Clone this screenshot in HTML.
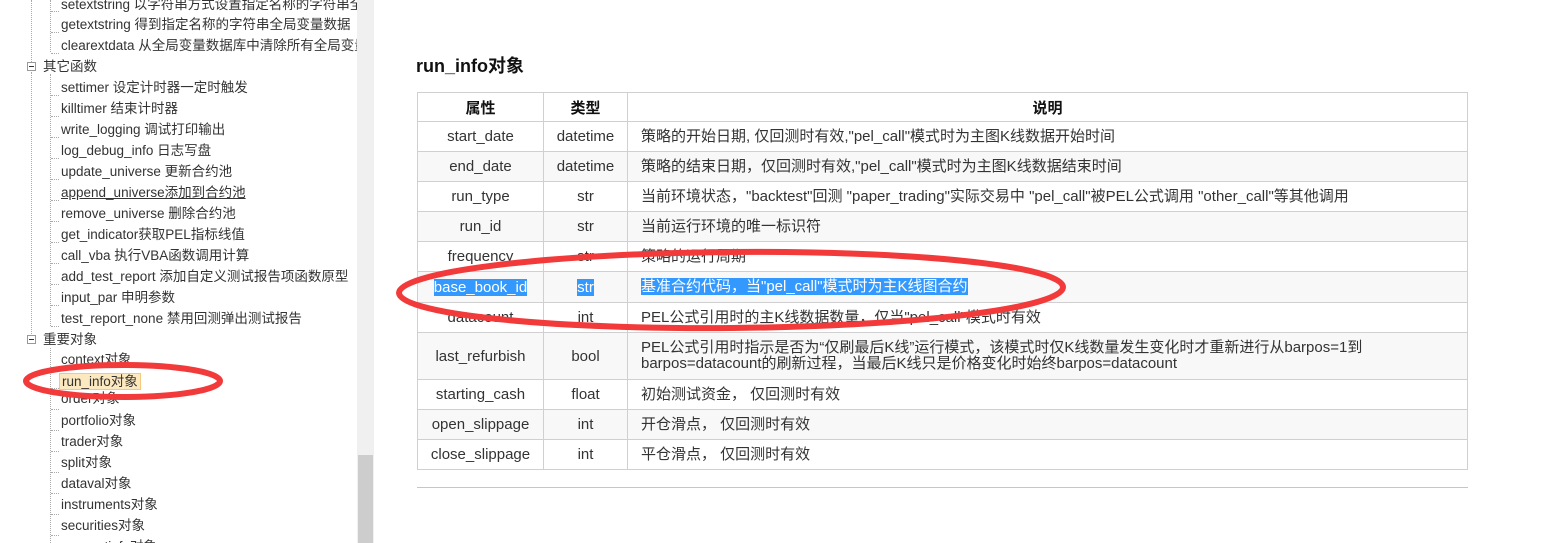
<!DOCTYPE html>
<html><head><meta charset="utf-8">
<style>
body{margin:0;width:1548px;height:543px;overflow:hidden;background:#fff;font-family:"Liberation Sans","Noto Sans CJK SC",sans-serif;color:#333;position:relative}
#side{position:absolute;left:0;top:0;width:357px;height:543px;overflow:hidden;font-size:13.5px}
.it{position:absolute;left:61px;white-space:nowrap;line-height:16px}
.grp{position:absolute;left:43px;white-space:nowrap;line-height:16px}
.con{position:absolute;left:51px;width:8px;border-top:1px dotted #aaa}
.exp{position:absolute;left:27px;width:7px;height:7px;border:1px solid #999;background:#fff}
.exp:after{content:"";position:absolute;left:1px;top:3px;width:5px;height:1px;background:#333}
.vl{position:absolute;border-left:1px dotted #aaa;width:0}
#sb{position:absolute;left:357px;top:0;width:17px;height:543px;background:#f0f0f0}
#th{position:absolute;left:358px;top:455px;width:15px;height:88px;background:#cdcdcd}
h3{position:absolute;left:416px;top:52px;margin:0;font-size:18px;font-weight:bold;color:#111}
table{position:absolute;left:417px;top:92px;width:1051px;border-collapse:collapse;font-size:15px}
td,th{border:1px solid #d0d0d0;padding:0;height:29px}
th{font-weight:bold;color:#111;height:28px}
td.c{text-align:center}
td.d{padding-left:13px;line-height:16px}
tr.g td{background:#f8f8f8}
.sel{background:#3399ff;color:#fff}
#hr{position:absolute;left:417px;top:487px;width:1051px;height:1px;background:#a8cdf0}
</style></head><body>
<div id="side">
<div class="vl" style="left:31px;top:0;height:62px"></div>
<div class="vl" style="left:31px;top:72px;height:262px"></div>
<div class="vl" style="left:50px;top:0;height:52px"></div>
<div class="vl" style="left:50px;top:74px;height:252px"></div>
<div class="vl" style="left:50px;top:348px;height:195px"></div>
<div class="con" style="top:11px"></div><div class="it" style="top:-3px">setextstring 以字符串方式设置指定名称的字符串全局变量</div>
<div class="con" style="top:32px"></div><div class="it" style="top:17px">getextstring 得到指定名称的字符串全局变量数据</div>
<div class="con" style="top:53px"></div><div class="it" style="top:38px">clearextdata 从全局变量数据库中清除所有全局变量</div>
<div class="exp" style="top:62px"></div><div class="grp" style="top:59px">其它函数</div>
<div class="con" style="top:95px"></div><div class="it" style="top:80px">settimer 设定计时器一定时触发</div>
<div class="con" style="top:116px"></div><div class="it" style="top:101px">killtimer 结束计时器</div>
<div class="con" style="top:137px"></div><div class="it" style="top:122px">write_logging 调试打印输出</div>
<div class="con" style="top:158px"></div><div class="it" style="top:143px">log_debug_info 日志写盘</div>
<div class="con" style="top:179px"></div><div class="it" style="top:164px">update_universe 更新合约池</div>
<div class="con" style="top:200px"></div><div class="it" style="top:185px;text-decoration:underline">append_universe添加到合约池</div>
<div class="con" style="top:221px"></div><div class="it" style="top:206px">remove_universe 删除合约池</div>
<div class="con" style="top:242px"></div><div class="it" style="top:227px">get_indicator获取PEL指标线值</div>
<div class="con" style="top:263px"></div><div class="it" style="top:248px">call_vba 执行VBA函数调用计算</div>
<div class="con" style="top:284px"></div><div class="it" style="top:269px">add_test_report 添加自定义测试报告项函数原型</div>
<div class="con" style="top:305px"></div><div class="it" style="top:290px">input_par 申明参数</div>
<div class="con" style="top:326px"></div><div class="it" style="top:311px">test_report_none 禁用回测弹出测试报告</div>
<div class="exp" style="top:335px"></div><div class="grp" style="top:332px">重要对象</div>
<div class="con" style="top:367px"></div><div class="it" style="top:352px">context对象</div>
<div class="con" style="top:388px"></div><div class="it" style="top:373px;left:59px;padding:0 2px;background:#fde9c0;border:1px solid #f5c87a;line-height:15px">run_info对象</div>
<div class="con" style="top:409px"></div><div class="it" style="top:391px">order对象</div>
<div class="con" style="top:430px"></div><div class="it" style="top:413px">portfolio对象</div>
<div class="con" style="top:451px"></div><div class="it" style="top:434px">trader对象</div>
<div class="con" style="top:472px"></div><div class="it" style="top:455px">split对象</div>
<div class="con" style="top:493px"></div><div class="it" style="top:476px">dataval对象</div>
<div class="con" style="top:514px"></div><div class="it" style="top:497px">instruments对象</div>
<div class="con" style="top:535px"></div><div class="it" style="top:518px">securities对象</div>
<div class="it" style="top:539px">accountinfo对象</div>
</div>
<div id="sb"></div><div id="th"></div>
<h3>run_info对象</h3>
<table>
<tr><th style="width:125px">属性</th><th style="width:83px">类型</th><th>说明</th></tr>
<tr><td class="c">start_date</td><td class="c">datetime</td><td class="d">策略的开始日期, 仅回测时有效,"pel_call"模式时为主图K线数据开始时间</td></tr>
<tr class="g"><td class="c">end_date</td><td class="c">datetime</td><td class="d">策略的结束日期，仅回测时有效,"pel_call"模式时为主图K线数据结束时间</td></tr>
<tr><td class="c">run_type</td><td class="c">str</td><td class="d">当前环境状态，"backtest"回测 "paper_trading"实际交易中 "pel_call"被PEL公式调用 "other_call"等其他调用</td></tr>
<tr class="g"><td class="c">run_id</td><td class="c">str</td><td class="d">当前运行环境的唯一标识符</td></tr>
<tr><td class="c">frequency</td><td class="c">str</td><td class="d">策略的运行周期</td></tr>
<tr class="g" style="height:31px"><td class="c"><span class="sel">base_book_id</span></td><td class="c"><span class="sel">str</span></td><td class="d"><span class="sel">基准合约代码，当"pel_call"模式时为主K线图合约</span></td></tr>
<tr><td class="c">datacount</td><td class="c">int</td><td class="d">PEL公式引用时的主K线数据数量，仅当"pel_call"模式时有效</td></tr>
<tr class="g"><td class="c" style="height:46px">last_refurbish</td><td class="c">bool</td><td class="d">PEL公式引用时指示是否为“仅刷最后K线”运行模式，该模式时仅K线数量发生变化时才重新进行从barpos=1到<br>barpos=datacount的刷新过程，当最后K线只是价格变化时始终barpos=datacount</td></tr>
<tr><td class="c">starting_cash</td><td class="c">float</td><td class="d">初始测试资金， 仅回测时有效</td></tr>
<tr class="g"><td class="c">open_slippage</td><td class="c">int</td><td class="d">开仓滑点， 仅回测时有效</td></tr>
<tr><td class="c">close_slippage</td><td class="c">int</td><td class="d">平仓滑点， 仅回测时有效</td></tr>
</table>
<div id="hr"></div>
<svg width="1548" height="543" style="position:absolute;left:0;top:0">
<ellipse cx="731" cy="290" rx="332" ry="38" transform="rotate(-0.5 731 290)" fill="none" stroke="#f23a3a" stroke-width="6"/>
<ellipse cx="123" cy="381" rx="97" ry="16" fill="none" stroke="#f23a3a" stroke-width="6"/>
</svg>
</body></html>
